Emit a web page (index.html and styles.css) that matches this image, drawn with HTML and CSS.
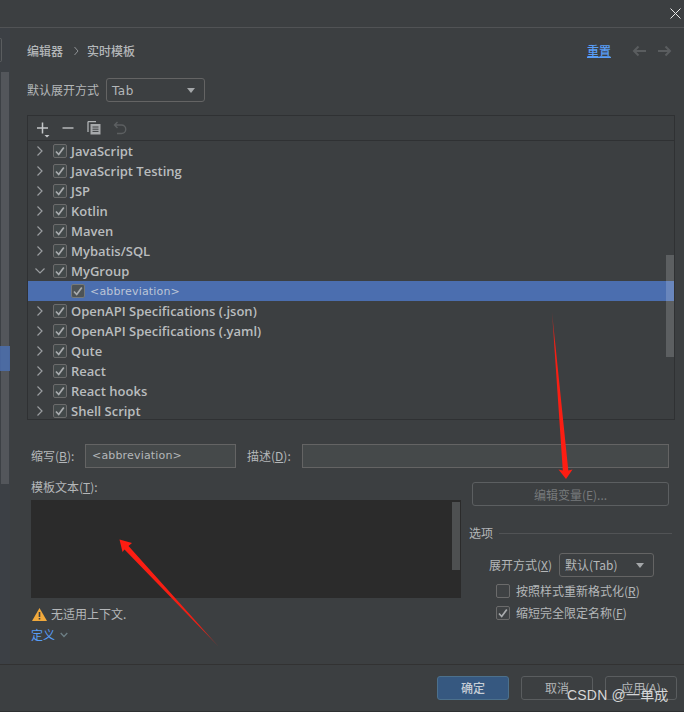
FILE: index.html
```html
<!DOCTYPE html>
<html lang="zh">
<head>
<meta charset="utf-8">
<title>实时模板</title>
<link rel="stylesheet" href="styles.css">
</head>
<body>
<svg class="defs" width="0" height="0">
  <symbol id="chev-r" viewBox="0 0 12 12"><path d="M3.500 1.500 8 6l-4.500 4.500" fill="none" stroke="#9a9da0" stroke-width="1.200"/></symbol>
  <symbol id="chev-d" viewBox="0 0 12 12"><path d="M1.500 3.500 6 8l4.500-4.500" fill="none" stroke="#9a9da0" stroke-width="1.200"/></symbol>
  <symbol id="tick" viewBox="0 0 14 14"><path d="M3 7.500 5.700 10.500 10.800 3.500" fill="none" stroke="#a9acae" stroke-width="1.700"/></symbol>
</svg>
<div class="dialog">
  <div class="titlebar">
    <svg class="close" width="11" height="11" viewBox="0 0 11 11"><path d="M.5.500l10 10M10.500.500l-10 10" stroke="#e8e8e8" stroke-width="1" fill="none"/></svg>
  </div>
  <div class="middle">
    <aside class="side">
      <div class="side-search"></div>
      <div class="side-thumb"></div>
      <div class="side-sel"></div>
    </aside>
    <main class="content">
      <header class="crumbs">
        <span>编辑器</span>
        <svg class="crumb-sep" width="7" height="10" viewBox="0 0 7 10"><path d="M1.500 1 5 5 1.500 9" fill="none" stroke="#8f9295" stroke-width="1"/></svg>
        <span>实时模板</span>
        <span class="spacer"></span>
        <a class="reset">重置</a>
        <svg class="nav-arrow" width="14" height="12" viewBox="0 0 14 12"><path d="M14 6H2M6.500 1.500 2 6l4.500 4.500" fill="none" stroke="#5a5d5f" stroke-width="2"/></svg>
        <svg class="nav-arrow" width="14" height="12" viewBox="0 0 14 12"><path d="M0 6h12M7.500 1.500 12 6l-4.500 4.500" fill="none" stroke="#5a5d5f" stroke-width="2"/></svg>
      </header>
      <div class="expand-row">
        <label>默认展开方式</label>
        <div class="select select-tab"><span class="latin tab-value">Tab</span><i class="caret"></i></div>
      </div>
      <section class="tree-box">
        <div class="toolbar">
          <svg class="tool" width="16" height="18" viewBox="0 0 16 18"><path d="M1 7h11M6.500 1.500v11" stroke="#c4c7c9" stroke-width="1.500" fill="none"/><path d="M8.500 14h5l-2.500 2.500z" fill="#c4c7c9"/></svg>
          <svg class="tool" width="14" height="14" viewBox="0 0 14 14"><path d="M1.500 7h11" stroke="#b4b7b9" stroke-width="1.500" fill="none"/></svg>
          <svg class="tool" width="14" height="14" viewBox="0 0 14 14"><path d="M1 .500h8M1 .500V11" stroke="#b0b3b5" stroke-width="1.300" fill="none"/><path d="M3.500 3h10v10.500h-10z" fill="#a6a9ab"/><path d="M5.500 6h6M5.500 8.200h6M5.500 10.400h6" stroke="#3c3f41" stroke-width="1"/></svg>
          <svg class="tool" width="14" height="14" viewBox="0 0 14 14"><path d="M4.500 1 1.500 4l3 3M1.500 4H8.500a3.800 3.800 0 0 1 0 8.500H4" stroke="#5c5f61" stroke-width="1.400" fill="none"/></svg>
        </div>
        <ul class="tree">
          <li class="row"><svg class="chev"><use href="#chev-r"/></svg><span class="check"><svg><use href="#tick"/></svg></span><span class="name">JavaScript</span></li>
          <li class="row"><svg class="chev"><use href="#chev-r"/></svg><span class="check"><svg><use href="#tick"/></svg></span><span class="name">JavaScript Testing</span></li>
          <li class="row"><svg class="chev"><use href="#chev-r"/></svg><span class="check"><svg><use href="#tick"/></svg></span><span class="name">JSP</span></li>
          <li class="row"><svg class="chev"><use href="#chev-r"/></svg><span class="check"><svg><use href="#tick"/></svg></span><span class="name">Kotlin</span></li>
          <li class="row"><svg class="chev"><use href="#chev-r"/></svg><span class="check"><svg><use href="#tick"/></svg></span><span class="name">Maven</span></li>
          <li class="row"><svg class="chev"><use href="#chev-r"/></svg><span class="check"><svg><use href="#tick"/></svg></span><span class="name">Mybatis/SQL</span></li>
          <li class="row"><svg class="chev"><use href="#chev-d"/></svg><span class="check"><svg><use href="#tick"/></svg></span><span class="name">MyGroup</span></li>
          <li class="row row-sel"><span class="check"><svg><use href="#tick"/></svg></span><span class="leaf latin">&lt;abbreviation&gt;</span></li>
          <li class="row"><svg class="chev"><use href="#chev-r"/></svg><span class="check"><svg><use href="#tick"/></svg></span><span class="name">OpenAPI Specifications (.json)</span></li>
          <li class="row"><svg class="chev"><use href="#chev-r"/></svg><span class="check"><svg><use href="#tick"/></svg></span><span class="name">OpenAPI Specifications (.yaml)</span></li>
          <li class="row"><svg class="chev"><use href="#chev-r"/></svg><span class="check"><svg><use href="#tick"/></svg></span><span class="name">Qute</span></li>
          <li class="row"><svg class="chev"><use href="#chev-r"/></svg><span class="check"><svg><use href="#tick"/></svg></span><span class="name">React</span></li>
          <li class="row"><svg class="chev"><use href="#chev-r"/></svg><span class="check"><svg><use href="#tick"/></svg></span><span class="name">React hooks</span></li>
          <li class="row"><svg class="chev"><use href="#chev-r"/></svg><span class="check"><svg><use href="#tick"/></svg></span><span class="name">Shell Script</span></li>
        </ul>
        <div class="tree-thumb"></div>
      </section>
      <div class="fields">
        <label class="f-label">缩写(<u>B</u>):</label>
        <div class="input input-abbr latin">&lt;abbreviation&gt;</div>
        <label class="f-label f-desc">描述(<u>D</u>):</label>
        <div class="input input-desc"></div>
      </div>
      <div class="lower">
        <div class="lower-left">
          <label class="tpl-label">模板文本(<u>T</u>):</label>
          <div class="editor"><div class="editor-thumb"></div></div>
          <div class="warn">
            <svg width="15" height="13" viewBox="0 0 15 13"><path d="M7.500 0 15 13H0z" fill="#f2a93b"/><path d="M6.700 4h1.600v5H6.700zM6.700 10h1.600v1.600H6.700z" fill="#3c3f41"/></svg>
            <span>无适用上下文.</span>
          </div>
          <div class="define"><a>定义</a><svg width="8" height="6" viewBox="0 0 8 6"><path d="M.7 1 4 4.500 7.300 1" fill="none" stroke="#6d7f85" stroke-width="1.300"/></svg></div>
        </div>
        <div class="lower-right">
          <div class="btn-vars">编辑变量(E)...</div>
          <div class="legend"><span>选项</span><i></i></div>
          <div class="opt-row">
            <label>展开方式(<u>X</u>)</label>
            <div class="select select-opt"><span>默认(Tab)</span><i class="caret"></i></div>
          </div>
          <div class="opt-check"><span class="check"></span><span>按照样式重新格式化(<u>R</u>)</span></div>
          <div class="opt-check opt-check2"><span class="check"><svg><use href="#tick"/></svg></span><span>缩短完全限定名称(<u>F</u>)</span></div>
        </div>
      </div>
    </main>
  </div>
  <footer class="footer">
    <button class="btn btn-primary">确定</button>
    <button class="btn">取消</button>
    <button class="btn">应用(A)</button>
  </footer>
</div>
<svg class="annot" width="684" height="712" viewBox="0 0 684 712">
  <defs>
    <linearGradient id="fade1" x1="0" y1="1" x2="0" y2="0"><stop offset="0" stop-color="#ff1d12"/><stop offset=".8" stop-color="#f51f14"/><stop offset="1" stop-color="#8a3330"/></linearGradient>
    <linearGradient id="fade2" x1="0" y1="0" x2="1" y2="1"><stop offset="0" stop-color="#ff1d12"/><stop offset=".8" stop-color="#f01f14"/><stop offset="1" stop-color="#7f3835"/></linearGradient>
  </defs>
  <path d="M566 479 572.500 469.500 568.300 470.500 552 312 562.800 470.500 558.500 469.500z" fill="url(#fade1)"/>
  <path d="M119.500 539.500 132 543 128.500 546 219 647 124.500 549.500 122.500 552z" fill="url(#fade2)"/>
</svg>
<div class="watermark">CSDN @一单成</div>
</body>
</html>
```
FILE: styles.css
```css
* { box-sizing: border-box; }
html, body { margin: 0; padding: 0; }
body {
  width: 684px;
  height: 712px;
  overflow: hidden;
  position: relative;
  background: #3c3f41;
  color: #b4b7b9;
  font: 12px/16px "Noto Sans CJK SC", "Open Sans", sans-serif;
}
.defs { position: absolute; }
u { text-underline-offset: 1px; }
.latin { font-family: "DejaVu Sans", "Noto Sans CJK SC", sans-serif; }
.dialog { height: 712px; display: flex; flex-direction: column; border-bottom: 1px solid #2e3032; }
.titlebar {
  height: 28px;
  flex: none;
  border-bottom: 1px solid #515355;
  display: flex;
  justify-content: flex-end;
  padding: 8px 3px 0 0;
}
.close { display: block; }
.middle { flex: 1; display: flex; min-height: 0; }
.side { width: 10px; flex: none; background: #3c4045; position: relative; }
.side-search {
  position: absolute; left: 0; top: 10px; width: 2px; height: 24px;
  border: 1px solid #5a5d60; border-left: 0; border-radius: 0 2px 2px 0;
}
.side-thumb { position: absolute; left: 1px; top: 44px; width: 8px; height: 412px; background: #53565b; }
.side-sel { position: absolute; left: 0; top: 318px; width: 10px; height: 25px; background: #4b6eaf; opacity: .85; }
.content { flex: 1; min-width: 0; padding: 14px 9px 0 17px; }
.crumbs { display: flex; align-items: center; height: 18px; color: #b4b7b9; font-weight: 500; }
.crumb-sep { margin: 0 7px 0 10px; }
.spacer { flex: 1; }
.reset { color: #589df6; text-decoration: underline; margin-right: 21px; }
.nav-arrow { margin-right: 12px; }
.nav-arrow:last-child { margin-right: 3px; }
.expand-row { display: flex; align-items: center; gap: 7px; margin-top: 18px; height: 24px; }
.select {
  height: 24px;
  border: 1px solid #646464;
  border-radius: 3px;
  display: flex;
  align-items: center;
  justify-content: space-between;
  padding: 0 9px 0 5px;
}
.select-tab { width: 99px; letter-spacing: .5px; }
.tab-value { padding-top: 1px; }
.caret { width: 0; height: 0; border: 4.500px solid transparent; border-top: 5px solid #a4a7a9; border-bottom: 0; }
.tree-box { margin-top: 13px; height: 305px; border: 1px solid #2f3133; position: relative; }
.toolbar {
  height: 25px;
  border-bottom: 1px solid #2f3133;
  display: flex;
  align-items: center;
  padding-left: 8px;
  gap: 12px;
}
.tool { display: block; }
.tool:first-child { margin-top: 4px; margin-right: -3px; }
.tree { list-style: none; margin: 0; padding: 0; }
.row { height: 20px; display: flex; align-items: center; padding-left: 6px; }
.chev { width: 12px; height: 12px; flex: none; margin-right: 7px; }
.check {
  width: 14px; height: 14px; flex: none;
  border: 1px solid #6b6b6b;
  border-radius: 2px;
  background: #43494a;
  display: block;
  position: relative;
}
.check svg { position: absolute; left: -1px; top: -1px; width: 14px; height: 14px; display: block; }
.name { margin-left: 4px; font: 600 13px/16px "Open Sans", sans-serif; color: #b9bcbe; white-space: nowrap; }
.row-sel { background: #4b6eaf; padding-left: 43px; }
.row-sel .check { background: #4d5356; border-color: #75797b; }
.leaf { margin-left: 5px; padding-top: 2px; color: #bcc5d6; font-size: 11px; letter-spacing: .17px; }
.tree-thumb { position: absolute; right: 0; top: 139px; width: 8px; height: 102px; background: #fff; opacity: .17; }
.fields { display: flex; align-items: center; margin-top: 24px; height: 24px; padding-left: 4px; }
.f-label { width: 54px; flex: none; white-space: nowrap; }
.f-desc { margin-left: 11px; width: 55px; }
.input { height: 24px; border: 1px solid #646464; background: #45494a; line-height: 21px; }
.input-abbr { width: 151px; padding-left: 6px; font-size: 11px; letter-spacing: .17px; }
.input-desc { width: 367px; }
.lower { display: flex; margin-top: 14px; padding-left: 4px; }
.lower-left { width: 430px; flex: none; }
.tpl-label { display: block; height: 18px; margin-top: -3px; line-height: 16px; }
.editor { height: 98px; background: #2b2b2b; position: relative; margin-top: 3px; }
.editor-thumb { position: absolute; right: 1px; top: 2px; width: 8px; height: 68px; background: #4e5051; }
.warn { display: flex; align-items: center; gap: 4px; margin: 8px 0 0 1px; height: 16px; }
.define { display: flex; align-items: center; gap: 5px; margin-top: 5px; height: 16px; color: #589df6; }
.lower-right { flex: 1; min-width: 0; padding-left: 11px; }
.btn-vars {
  width: 197px; height: 24px;
  border: 1px solid #5c5f61;
  border-radius: 3px;
  text-align: center;
  line-height: 23px;
  color: #777a7c;
}
.legend { display: flex; align-items: center; gap: 6px; margin: 18px 0 0 -3px; height: 18px; }
.legend i { flex: none; width: 173px; height: 1px; background: #515355; }
.opt-row { display: flex; align-items: center; gap: 7px; margin: 11px 0 0 17px; height: 24px; }
.select-opt { width: 95px; padding-left: 5px; }
.opt-check { display: flex; align-items: center; gap: 6px; margin: 6px 0 0 24px; height: 16px; }
.opt-check .check { background: #3f4244; }
.opt-check2 { margin-top: 6px; }
.footer {
  height: 47px;
  flex: none;
  border-top: 1px solid #323232;
  display: flex;
  justify-content: flex-end;
  align-items: flex-start;
  gap: 12px;
  padding: 11px 7px 0 0;
}
.btn {
  width: 72px; height: 24px;
  padding: 0;
  background: #3c3f41;
  border: 1px solid #5a5d5f;
  border-radius: 3px;
  color: #b4b7b9;
  font: inherit;
}
.btn-primary { background: #365880; border-color: #4c708c; color: #c6cdd6; font-weight: 500; }
.annot { position: absolute; left: 0; top: 0; pointer-events: none; }
.watermark {
  position: absolute; left: 567px; top: 686px;
  font: 14px/18px "Liberation Sans", "Noto Sans CJK SC", sans-serif;
  letter-spacing: .2px;
  color: #d6d7d8;
  white-space: nowrap;
}
```
